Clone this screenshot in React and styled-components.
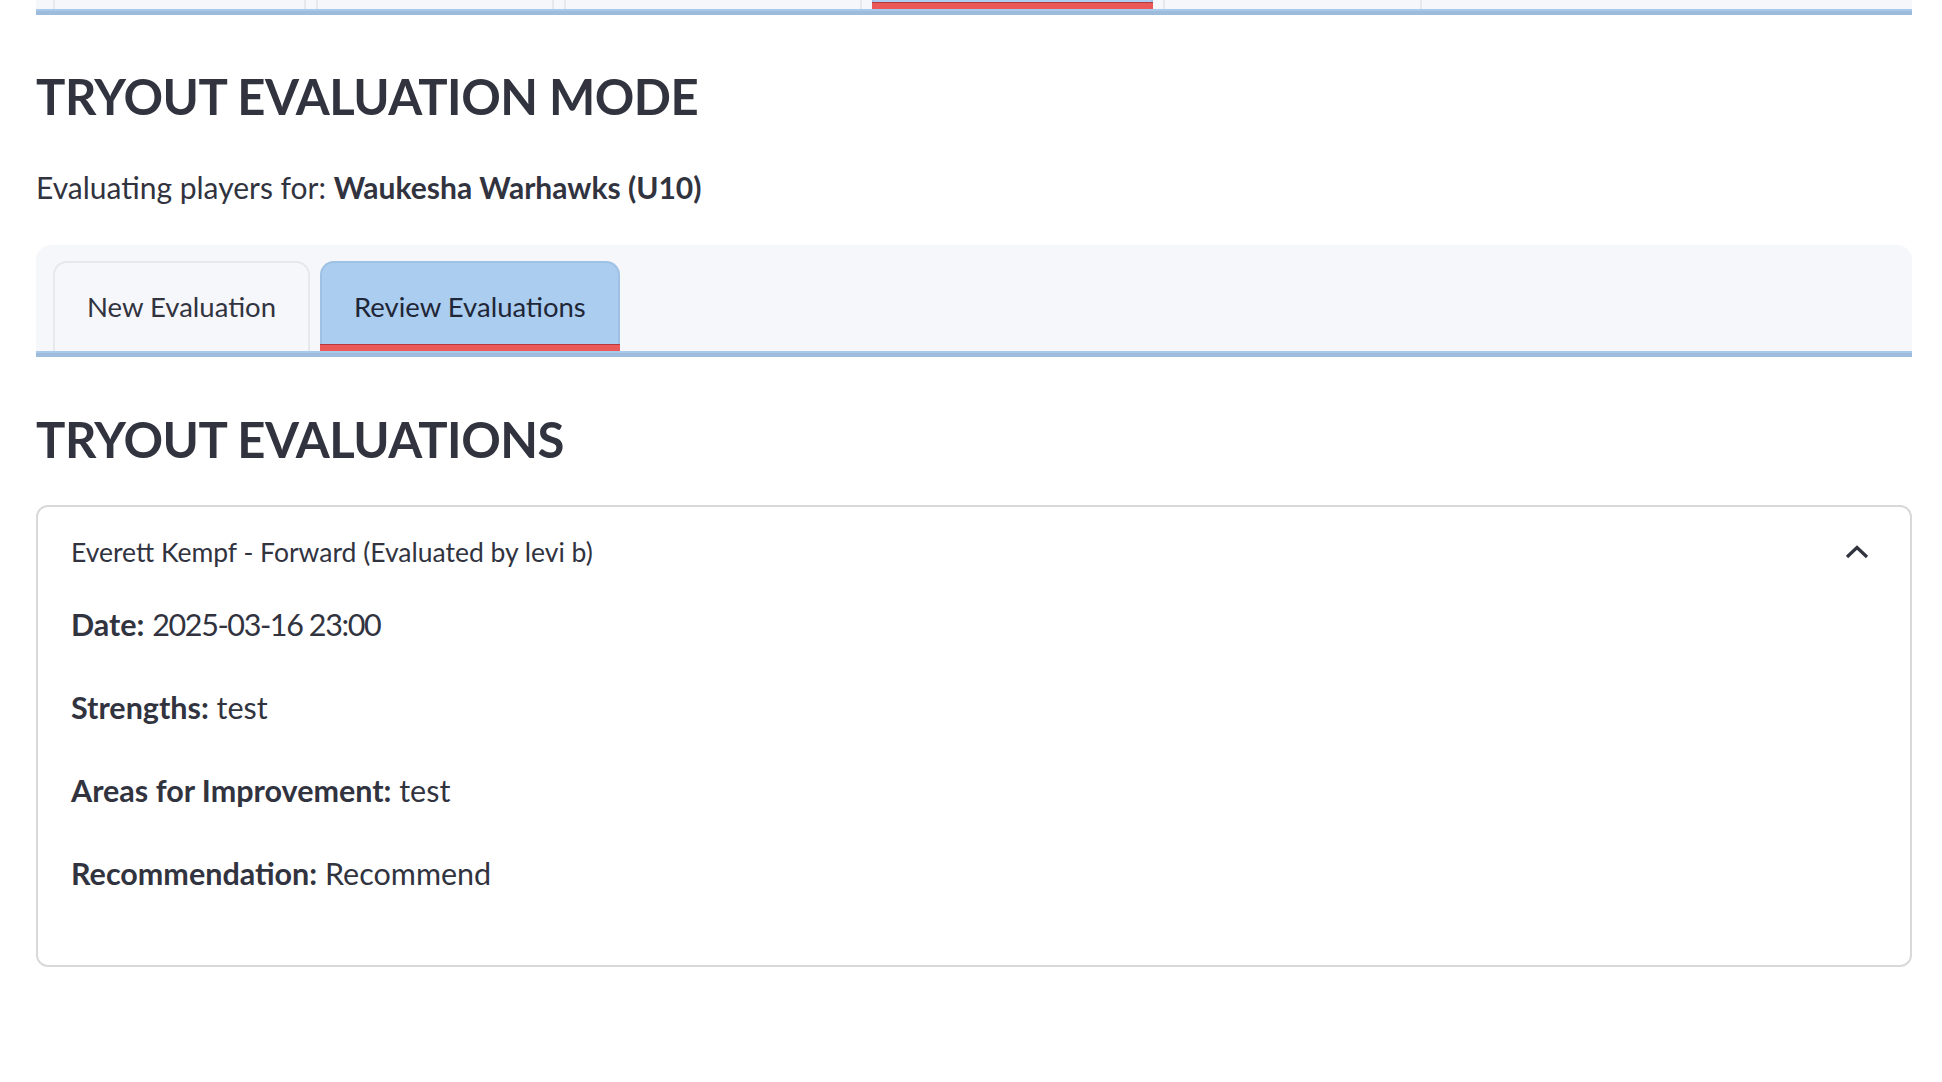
import React from "react";
import styled, { createGlobalStyle } from "styled-components";

const GlobalStyle = createGlobalStyle`
  html, body { margin: 0; padding: 0; background: #ffffff; }
  body {
    font-family: Lato, "Noto Sans", sans-serif;
    color: #31333f;
    -webkit-font-smoothing: antialiased;
  }
  * { box-sizing: border-box; }
`;

const Page = styled.main`
  padding: 0 30px 60px 36px;
`;

const TabBar = styled.div`
  margin-top: ${(p) => p.$mt || "0px"};
  background: #f6f7fa;
  border-bottom: 4px solid #9dbbdb;
  border-radius: ${(p) => (p.$clipped ? "0" : "15px 15px 0 0")};
`;

const TabList = styled.div`
  display: flex;
  gap: 10px;
  padding: ${(p) => (p.$clipped ? "0 17px" : "16px 17px 0")};
  border-bottom: 2px solid #a9c9ea;
`;

const Tab = styled.button`
  position: relative;
  height: 90px;
  padding: 0 32px;
  font-family: inherit;
  font-size: 27.5px;
  font-weight: 400;
  color: ${(p) => (p.$active ? "#1f2637" : "#31333f")};
  background: ${(p) => (p.$active ? "#abcdf0" : "#f6f7fa")};
  border: 2px solid ${(p) => (p.$active ? "#9fc1e4" : "#e5e8ed")};
  border-bottom: none;
  border-radius: 14px 14px 0 0;
  cursor: pointer;

  &::after {
    content: "";
    display: ${(p) => (p.$active ? "block" : "none")};
    position: absolute;
    left: -2px;
    right: -2px;
    bottom: 0;
    height: 6px;
    background: #ea5858;
    border-top: 1px solid #b53a3e;
  }
`;

const StubTab = styled(Tab)`
  height: 9px;
  width: ${(p) => p.$w}px;
  padding: 0;
  border-top: none;
  border-radius: 0;
`;

const Heading = styled.h1`
  margin: ${(p) => p.$mt || "51.5px"} 0 0;
  font-size: 49px;
  font-weight: 700;
  line-height: 1.2;
  letter-spacing: -0.5px;
  color: #31333f;
`;

const Subtitle = styled.p`
  margin: 43.5px 0 0;
  font-size: 30px;
  line-height: 1.2;
  color: #31333f;
`;

const Strong = styled.strong`
  font-weight: 700;
`;

const Value = styled.span`
  letter-spacing: ${(p) => (p.$tight ? "-1.4px" : "normal")};
`;

const Expander = styled.section`
  margin-top: 36px;
  border: 2px solid #d9d9dc;
  border-radius: 12px;
  background: #ffffff;
`;

const ExpanderHeader = styled.div`
  display: flex;
  align-items: center;
  justify-content: space-between;
  height: 90px;
  padding: 0 41px 0 33px;
  font-size: 26.5px;
  color: #31333f;
`;

const ExpanderBody = styled.div`
  padding: 3px 33px 33px;
`;

const Field = styled.p`
  margin: 0 0 35px;
  font-size: 30.5px;
  line-height: 48px;
  color: #31333f;
`;

const Chevron = () => (
  <svg width="24" height="14" viewBox="0 0 24 14" aria-hidden="true">
    <polyline
      points="2,12 12,2.5 22,12"
      fill="none"
      stroke="#31333f"
      strokeWidth="3.2"
      strokeLinejoin="miter"
    />
  </svg>
);

const topTabs = [253, 238, 298, 281, 259];

const fields = [
  ["Date:", "2025-03-16 23:00", true],
  ["Strengths:", "test"],
  ["Areas for Improvement:", "test"],
  ["Recommendation:", "Recommend"],
];

export default function App() {
  return (
    <>
      <GlobalStyle />
      <Page>
        <TabBar $clipped>
          <TabList $clipped>
            {topTabs.map((w, i) => (
              <StubTab key={i} $w={w} $active={i === 3} aria-hidden="true" />
            ))}
          </TabList>
        </TabBar>

        <Heading>TRYOUT EVALUATION MODE</Heading>
        <Subtitle>
          Evaluating players for: <Strong>Waukesha Warhawks (U10)</Strong>
        </Subtitle>

        <TabBar $mt="40px">
          <TabList>
            <Tab>New Evaluation</Tab>
            <Tab $active>Review Evaluations</Tab>
          </TabList>
        </TabBar>

        <Heading $mt="53.5px">TRYOUT EVALUATIONS</Heading>

        <Expander>
          <ExpanderHeader>
            <span>Everett Kempf - Forward (Evaluated by levi b)</span>
            <Chevron />
          </ExpanderHeader>
          <ExpanderBody>
            {fields.map(([label, value, tight]) => (
              <Field key={label}>
                <Strong>{label}</Strong> <Value $tight={tight}>{value}</Value>
              </Field>
            ))}
          </ExpanderBody>
        </Expander>
      </Page>
    </>
  );
}
